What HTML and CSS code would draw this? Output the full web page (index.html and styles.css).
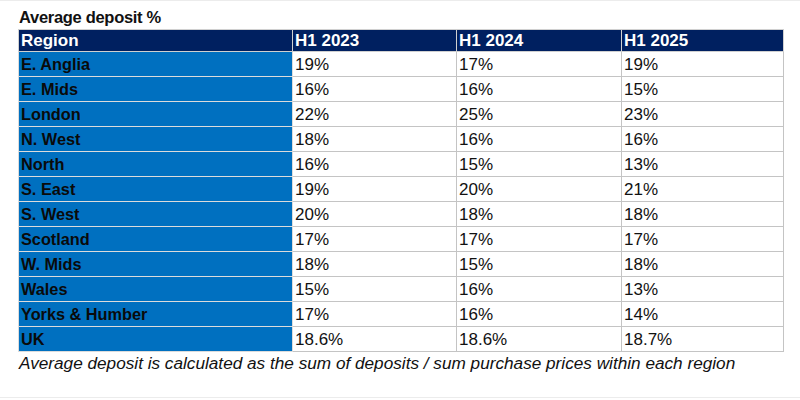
FILE: index.html
```html
<!DOCTYPE html>
<html>
<head>
<meta charset="utf-8">
<link rel="stylesheet" href="styles.css">
</head>
<body>
<div class="frame">
  <div class="title">Average deposit %</div>
  <table class="grid">
    <thead>
      <tr><th class="region">Region</th><th>H1 2023</th><th>H1 2024</th><th>H1 2025</th></tr>
    </thead>
    <tbody>
      <tr><td class="region">E. Anglia</td><td>19%</td><td>17%</td><td>19%</td></tr>
      <tr><td class="region">E. Mids</td><td>16%</td><td>16%</td><td>15%</td></tr>
      <tr><td class="region">London</td><td>22%</td><td>25%</td><td>23%</td></tr>
      <tr><td class="region">N. West</td><td>18%</td><td>16%</td><td>16%</td></tr>
      <tr><td class="region">North</td><td>16%</td><td>15%</td><td>13%</td></tr>
      <tr><td class="region">S. East</td><td>19%</td><td>20%</td><td>21%</td></tr>
      <tr><td class="region">S. West</td><td>20%</td><td>18%</td><td>18%</td></tr>
      <tr><td class="region">Scotland</td><td>17%</td><td>17%</td><td>17%</td></tr>
      <tr><td class="region">W. Mids</td><td>18%</td><td>15%</td><td>18%</td></tr>
      <tr><td class="region">Wales</td><td>15%</td><td>16%</td><td>13%</td></tr>
      <tr><td class="region">Yorks &amp; Humber</td><td>17%</td><td>16%</td><td>14%</td></tr>
      <tr><td class="region">UK</td><td>18.6%</td><td>18.6%</td><td>18.7%</td></tr>
    </tbody>
  </table>
  <div class="note">Average deposit is calculated as the sum of deposits / sum purchase prices within each region</div>
</div>
</body>
</html>
```
FILE: styles.css
```css
html, body {
  margin: 0;
  padding: 0;
  background: #ffffff;
}
body {
  font-family: "Liberation Sans", Arial, sans-serif;
  color: #111;
}
.frame {
  width: 800px;
  height: 398px;
  box-sizing: border-box;
  border-top: 1px solid #ececec;
  border-bottom: 1px solid #ececec;
  padding: 4px 0 0 18px;
}
.title {
  font-weight: bold;
  font-size: 16.5px;
  line-height: 24px;
  padding-left: 1px;
  letter-spacing: -0.3px;
}
.grid {
  border-collapse: collapse;
  table-layout: fixed;
  width: 766px;
  font-size: 17px;
}
.grid th, .grid td {
  border: 1px solid #c4c4c4;
  padding: 1px 0 0 2px;
  text-align: left;
  white-space: nowrap;
  overflow: hidden;
}
.grid th {
  background: #002060;
  color: #ffffff;
  height: 20px;
  line-height: 20px;
  font-weight: bold;
  border-color: #d0d0d0;
}
.grid td {
  height: 23px;
  line-height: 23px;
}
.grid th:nth-child(1) { width: 271px; }
.grid th:nth-child(2) { width: 161px; }
.grid th:nth-child(3) { width: 162px; }
.grid td.region {
  background: #0070c0;
  color: #0a0a0a;
  font-weight: bold;
  font-size: 16.3px;
  border-color: #dcdcdc;
}
.note {
  font-style: italic;
  font-size: 17.2px;
  line-height: 22px;
  padding-left: 1px;
  color: #111;
}
```
